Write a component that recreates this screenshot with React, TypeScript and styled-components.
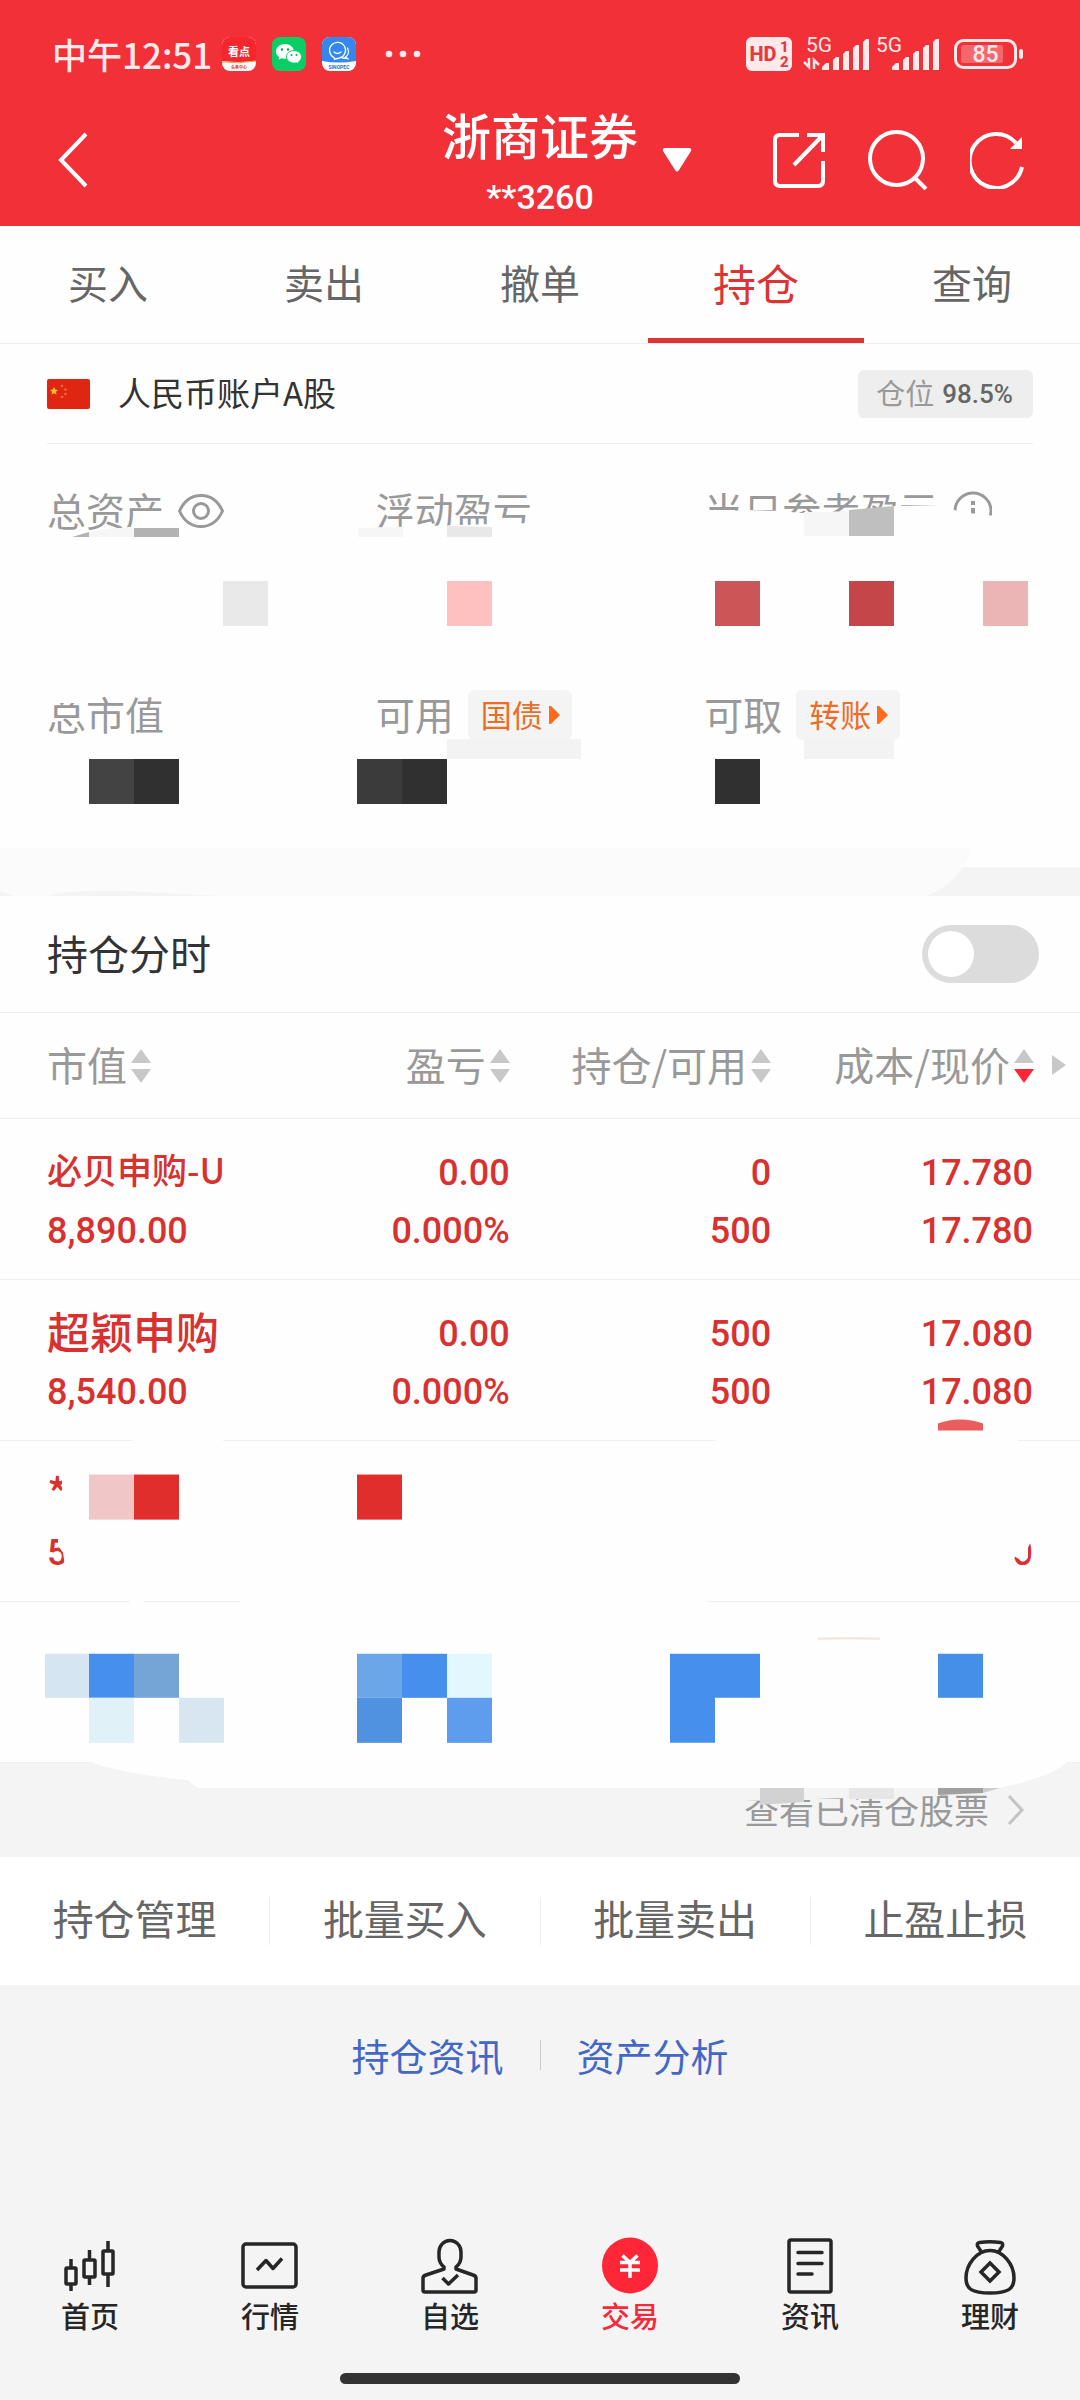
import React from "react";
import styled, { createGlobalStyle } from "styled-components";

const cjk = `"Noto Sans CJK SC", "Noto Sans", sans-serif`;
const numeric = `Roboto, "Noto Sans CJK SC", sans-serif`;

const GlobalStyle = createGlobalStyle`
  * { box-sizing: border-box; }
  body { margin: 0; background: #f4f4f4; font-family: ${cjk}; color: #333; }
  button { border: 0; padding: 0; margin: 0; background: none; font: inherit; color: inherit; }
  a { color: inherit; text-decoration: none; }
  h1, h2, p { margin: 0; font: inherit; }
  svg { display: block; flex: none; }
`;

const Page = styled.div`
  display: flex;
  flex-direction: column;
  min-height: 100vh;
`;

/* Optical centring for Chinese labels that stand beside icons */
const LabelText = styled.span`
  padding-bottom: 4px;
`;

/* ---------- top ---------- */
const Top = styled.header`
  background: #f13037;
  color: #fff;
`;
const StatusBar = styled.div`
  display: flex;
  align-items: center;
  height: 84px;
  padding: 24px 56px 0 52px;
  color: #ffe9ea;
  font-size: 35px;
  font-weight: 500;
  line-height: 58px;
`;
const AppIcons = styled.div`
  display: flex;
  align-items: center;
  gap: 16px;
  margin-left: 10px;
`;
const StatusRight = styled.div`
  display: flex;
  align-items: center;
  margin-left: auto;
`;
const NavBar = styled.div`
  display: grid;
  grid-template-columns: 1fr auto 1fr;
  align-items: center;
  height: 142px;
  padding: 10px 56px 0;
`;
const IconButton = styled.button`
  display: flex;
  align-items: center;
`;
const Broker = styled.div`
  text-align: center;
`;
const BrokerName = styled.h1`
  font-size: 49px;
  font-weight: 500;
  line-height: 80px;
`;
const BrokerId = styled.p`
  padding-bottom: 6px;
  font-family: ${numeric};
  font-size: 34px;
  font-weight: 500;
  line-height: 46px;
`;
const NavTools = styled.div`
  display: flex;
  align-items: center;
  gap: 42px;
  padding-left: 24px;
`;
const Dropdown = styled(IconButton)`
  margin-right: auto;
`;

const Tabs = styled.nav`
  display: flex;
  height: 118px;
  background: #fefefe;
  border-bottom: 1px solid #ececec;
`;
const Tab = styled.a<{ $active?: boolean }>`
  flex: 1;
  display: flex;
  justify-content: center;
  font-size: ${(p) => (p.$active ? 43 : 40)}px;
  line-height: 112px;
  color: ${(p) => (p.$active ? "#dd3333" : "#666")};
  border-bottom: 5px solid ${(p) => (p.$active ? "#dd3333" : "transparent")};
`;

/* ---------- assets ---------- */
const Covered = styled.section`
  position: relative;
`;
const Cover = styled.svg`
  position: absolute;
  inset: 0;
  width: 100%;
  height: 100%;
  pointer-events: none;
`;
const AssetCard = styled.div`
  padding: 0 47px 38px;
  background: #fefefe;
`;
const Account = styled.div`
  display: flex;
  align-items: center;
  height: 100px;
  border-bottom: 1px solid #ececec;
`;
const AccountName = styled.h2`
  display: flex;
  margin-left: 28px;
  font-size: 33px;
`;
const Position = styled.div`
  display: flex;
  align-items: center;
  gap: 8px;
  height: 48px;
  margin-left: auto;
  padding: 0 20px 0 18px;
  border-radius: 6px;
  background: #eee;
  font-size: 29px;
  color: #999;
`;
const PositionValue = styled.b`
  font-family: ${numeric};
  font-size: 26px;
  font-weight: 500;
  color: #666;
`;
const AssetGrid = styled.div`
  display: grid;
  grid-template-columns: repeat(3, 1fr);
  row-gap: 60px;
  padding-top: 37px;
`;
const Asset = styled.div`
  height: 144px;
`;
const AssetLabel = styled.div`
  display: flex;
  align-items: center;
  gap: 14px;
  height: 60px;
  font-size: 39px;
  color: #999;
  white-space: nowrap;
`;
const Tag = styled.button`
  display: flex;
  align-items: center;
  gap: 6px;
  height: 50px;
  padding: 0 12px 0 13px;
  border-radius: 6px;
  background: #f4f4f4;
  font-size: 31px;
  color: #ea6d28;
`;
const Gap = styled.div`
  height: 29px;
  background: #f4f4f4;
`;

/* ---------- holdings ---------- */
const SwitchRow = styled.label`
  display: flex;
  align-items: center;
  justify-content: space-between;
  height: 117px;
  padding: 0 41px 0 47px;
  background: #fefefe;
  border-bottom: 1px solid #ececec;
  font-size: 41px;
`;
const Switch = styled.input`
  appearance: none;
  width: 117px;
  height: 58px;
  margin: 0;
  padding: 6px;
  border-radius: 29px;
  background: #dcdcdc;
  &::before {
    content: "";
    display: block;
    width: 46px;
    height: 46px;
    border-radius: 50%;
    background: #fff;
  }
`;
const Table = styled.table`
  width: 100%;
  table-layout: fixed;
  border-collapse: separate;
  border-spacing: 0;
  background: #fefefe;
`;
const Th = styled.th<{ $width?: string; $start?: boolean }>`
  position: relative;
  width: ${(p) => p.$width ?? "auto"};
  height: 106px;
  padding: 0 0 0 ${(p) => (p.$start ? 47 : 0)}px;
  border-bottom: 1px solid #f0f0f0;
  font-weight: 400;
  &:last-child { padding-right: 46px; }
`;
const Sort = styled.button<{ $start?: boolean }>`
  display: flex;
  align-items: center;
  justify-content: ${(p) => (p.$start ? "flex-start" : "flex-end")};
  gap: 4px;
  width: 100%;
  font-size: 40px;
  color: #999;
  white-space: nowrap;
`;
const More = styled.svg`
  position: absolute;
  top: 42px;
  right: 14px;
`;
const Td = styled.td`
  height: 161px;
  padding: 25px 0 19px;
  border-bottom: 1px solid #f0f0f0;
  text-align: right;
  color: #d83130;
  &:first-child { padding-left: 47px; text-align: left; }
  &:last-child { padding-right: 47px; }
`;
const Line = styled.div`
  height: 58px;
  font-family: ${numeric};
  font-size: 36px;
  font-weight: 500;
  line-height: 58px;
  white-space: nowrap;
`;
const Name = styled(Line)<{ $small?: boolean }>`
  font-family: ${cjk};
  font-size: ${(p) => (p.$small ? 35 : 43)}px;
  line-height: 50px;
`;
const ClosedBar = styled.div`
  display: flex;
  justify-content: flex-end;
  height: 94px;
  padding: 0 55px;
  background: #f4f4f4;
`;
const ClosedLink = styled.a`
  display: flex;
  align-items: center;
  gap: 18px;
  font-size: 35px;
  color: #999;
`;

/* ---------- actions ---------- */
const Actions = styled.div`
  display: flex;
  align-items: center;
  height: 128px;
  background: #fff;
`;
const Action = styled.button`
  flex: 1;
  height: 48px;
  padding-bottom: 8px;
  border-right: 1px solid #eee;
  font-size: 41px;
  line-height: 40px;
  color: #666;
  &:last-child { border-right: 0; }
`;
const Links = styled.div`
  display: flex;
  justify-content: center;
  align-items: center;
  padding-top: 42px;
`;
const TextLink = styled.a`
  padding: 0 36px;
  font-size: 38px;
  line-height: 56px;
  color: #4368c4;
`;
const Divider = styled.span`
  width: 1px;
  height: 30px;
  background: #ccc;
`;

/* ---------- bottom bar ---------- */
const BottomNav = styled.nav`
  display: flex;
  margin-top: auto;
`;
const BottomItem = styled.a<{ $active?: boolean }>`
  flex: 1;
  display: flex;
  flex-direction: column;
  align-items: center;
  font-size: 29px;
  font-weight: 500;
  line-height: 36px;
  color: ${(p) => (p.$active ? "#f52a3a" : "#262626")};
`;
const HomeIndicator = styled.div`
  align-self: center;
  width: 37%;
  height: 11px;
  margin: 40px 0 16px;
  border-radius: 6px;
  background: #333;
`;

/* ---------- status icons ---------- */
const NewsApp = () => (
  <svg width="34" height="34" viewBox="0 0 34 34">
    <rect width="34" height="34" rx="8" fill="#fff" />
    <path d="M0 24V8a8 8 0 0 1 8-8h18a8 8 0 0 1 8 8v16q-17 2-34 0z" fill="#f7262c" />
    <path d="M0 25q17 2 34-1" stroke="#e9a63c" fill="none" />
    <text x="17" y="19" fontSize="11" fontWeight="700" fill="#fff" textAnchor="middle">看点</text>
    <text x="17" y="32" fontSize="4" fontWeight="700" fill="#e03030" textAnchor="middle">头条中心</text>
  </svg>
);
const WeChat = () => (
  <svg width="34" height="34" viewBox="0 0 34 34">
    <rect width="34" height="34" rx="8" fill="#07cf65" />
    <path d="M13 7c-5 0-9 3.400-9 7.500 0 2.300 1.300 4.300 3.300 5.700l-.8 2.600 3-1.600c1.100.3 2.200.5 3.500.5 5 0 9-3.200 9-7.200S18 7 13 7z" fill="#fff" />
    <path d="M22 13.500c-4.200 0-7.500 2.800-7.500 6.300s3.300 6.300 7.500 6.300c1 0 1.900-.1 2.700-.4l2.500 1.400-.7-2.200c1.800-1.200 3-3 3-5.100 0-3.500-3.300-6.300-7.500-6.300z" fill="#fff" stroke="#07cf65" />
    <g fill="#07a552"><circle cx="10" cy="12.500" r="1.200" /><circle cx="16" cy="12.500" r="1.200" /><circle cx="19.500" cy="18" r="1" /><circle cx="24.500" cy="18" r="1" /></g>
  </svg>
);
const SinopecApp = () => (
  <svg width="34" height="34" viewBox="0 0 34 34">
    <rect width="34" height="34" rx="8" fill="#fff" />
    <path d="M0 24V8a8 8 0 0 1 8-8h18a8 8 0 0 1 8 8v16q-17 3-34 0z" fill="#3387ee" />
    <g fill="none" stroke="#fff" strokeWidth="1.300" strokeLinecap="round">
      <path d="M12 20.500a8 8 0 1 1 5 .7l-4.500 1z" />
      <path d="M12 15q3.500 3 7 0M25.500 11c2 4 .5 7.500-2 9l2 1.500-5-.5" />
    </g>
    <text x="17" y="32" fontSize="5" fontWeight="700" fill="#2a6fc4" textAnchor="middle" fontFamily="Roboto">SINOPEC</text>
  </svg>
);
const Ellipsis = () => (
  <svg width="64" height="8" viewBox="0 0 64 8" fill="#ffe9ea">
    <circle cx="17" cy="4" r="3.300" /><circle cx="31" cy="4" r="3.300" /><circle cx="45" cy="4" r="3.300" />
  </svg>
);
const StatusIcons = () => (
  <svg width="278" height="54" viewBox="746 28 278 54" fill="#ffe9ea" fontFamily="Roboto, sans-serif">
    <rect x="746" y="38" width="46" height="34" rx="6" />
    <text x="749.500" y="62" fontSize="20" fontWeight="800" fill="#e33a42">HD</text>
    <text x="780" y="53" fontSize="15" fontWeight="800" fill="#e33a42">1</text>
    <text x="780" y="68" fontSize="15" fontWeight="800" fill="#e33a42">2</text>
    <text x="806" y="53" fontSize="21" fontWeight="400">5G</text>
    <path d="M809 59v9l-5-5M814 70v-9l5 5" stroke="#ffe9ea" strokeWidth="2.500" fill="none" />
    {[822, 892].map((x) => (
      <path
        key={x}
        d={`M${x} 71v-3l4-4h3v7zM${x + 11} 71V61l3-3h3v13zM${x + 21} 71V55l3-3h3v19zM${x + 31} 71V49l3-3h3v25zM${x + 41} 71V43l3-3h3v31z`}
      />
    ))}
    <text x="876" y="53" fontSize="21" fontWeight="400">5G</text>
    <rect x="955.500" y="41.500" width="60" height="27" rx="8" fill="none" stroke="#ffe9ea" strokeWidth="3" />
    <rect x="961" y="46" width="42" height="18" rx="3" fill="#f4676d" />
    <rect x="1019" y="50" width="4" height="10" rx="2" />
    <text x="985.500" y="63" fontSize="23" fontWeight="500" textAnchor="middle">85</text>
  </svg>
);

/* ---------- small drawings ---------- */
const Flag = () => (
  <svg width="43" height="30" viewBox="0 0 43 30">
    <rect width="43" height="30" rx="2" fill="#e02612" />
    <path d="M7 8l1.200 2.600 2.800.3-2.100 1.900.6 2.800L7 14.200l-2.500 1.400.6-2.800L3 10.900l2.800-.3z" fill="#ffc527" />
    <g fill="#ea6a30"><circle cx="15" cy="7" r="1.300" /><circle cx="18.500" cy="10.500" r="1.300" /><circle cx="18.500" cy="15" r="1.300" /><circle cx="15" cy="18" r="1.300" /></g>
  </svg>
);
const Eye = () => (
  <svg width="46" height="34" viewBox="0 0 46 34" fill="none" stroke="#999" strokeWidth="3">
    <path d="M1.500 17C6 7 14 1.500 23 1.500S40 7 44.500 17C40 27 32 32.500 23 32.500S6 27 1.500 17z" />
    <circle cx="23" cy="17" r="7.500" />
  </svg>
);
const Info = () => (
  <svg width="40" height="40" viewBox="0 0 40 40" fill="none" stroke="#999" strokeWidth="3">
    <circle cx="21" cy="20" r="18" />
    <path d="M21 17v14M21 10v4" strokeWidth="4" />
  </svg>
);
const TagArrow = () => (
  <svg width="11" height="18" viewBox="0 0 11 18"><path d="M0 0h2l9 9-9 9H0z" fill="#ff6a1c" /></svg>
);
const SortArrows = ({ down }: { down?: boolean }) => (
  <svg width="20" height="34" viewBox="0 0 20 34">
    <path d="M10 0l10 14H0z" fill="#c8c8c8" />
    <path d="M0 20h20L10 34z" fill={down ? "#ff2638" : "#c8c8c8"} />
  </svg>
);

const Redaction = ({ cells }: { cells: [number, number, number, number, string][] }) => (
  <>
    {cells.map(([x, y, w, h, c]) => (
      <rect key={`${x}-${y}`} x={x} y={y} width={w} height={h} fill={c} />
    ))}
  </>
);

const AssetCover = () => (
  <Cover viewBox="0 344 1080 552" preserveAspectRatio="none" aria-hidden="true">
    <path d="M70 537L90 531 130 527 180 528V545H70zM358 528L530 523V545H358z" fill="#fefefe" />
    <path d="M700 513L745 510 782 511 800 513 850 511 893 506 940 505 960 512 996 516V545H700z" fill="#fefefe" />
    <path d="M72 537l17-5v5zM134 528h45v9h-45z" fill="#b2b2b2" />
    <path d="M89 532l25-4h20v9H89zM358 528l45-1v10h-45zM804 512h45v24h-45z" fill="#f6f6f6" />
    <path d="M447 526l45 1v10h-45z" fill="#e8e8e8" />
    <path d="M849 510l45-4v30h-45z" fill="#bfbfbf" />
    <Redaction
      cells={[
        [223, 581, 45, 45, "#e9e9e9"],
        [447, 581, 45, 45, "#ffc0c0"],
        [715, 581, 45, 45, "#ca5658"],
        [849, 581, 45, 45, "#c54649"],
        [983, 581, 45, 45, "#ebb4b5"],
        [48, 690, 38, 13, "#fefefe"],
        [89, 759, 45, 45, "#434343"],
        [134, 759, 45, 45, "#303030"],
        [357, 759, 45, 45, "#3b3b3b"],
        [402, 759, 45, 45, "#303030"],
        [715, 759, 45, 45, "#303030"],
        [447, 739, 134, 20, "#f3f3f3"],
        [804, 739, 90, 20, "#f3f3f3"],
      ]}
    />
    <path d="M0 848H972Q962 880 928 896H0z" fill="#fbfbfb" />
    <path d="M0 891l13 5H0zM47 896q20-6 80-5l94 5z" fill="#f4f4f4" />
  </Cover>
);

const HoldingsCover = () => (
  <Cover viewBox="0 1013 1080 843" preserveAspectRatio="none" aria-hidden="true">
    <Redaction
      cells={[
        [133, 1438, 90, 4, "#fefefe"],
        [716, 1438, 302, 4, "#fefefe"],
        [130, 1599, 13, 4, "#fefefe"],
        [240, 1599, 467, 4, "#fefefe"],
        [89, 1474, 45, 45, "#f0c6c6"],
        [134, 1474, 45, 45, "#e02e2d"],
        [357, 1474, 45, 45, "#e02e2d"],
        [45, 1653, 44, 44, "#d5e5f2"],
        [89, 1653, 45, 44, "#468fec"],
        [134, 1653, 45, 44, "#74a5d6"],
        [89, 1697, 45, 45, "#e0f1f7"],
        [179, 1697, 45, 45, "#d8e6f2"],
        [357, 1653, 45, 44, "#6ba6e9"],
        [402, 1653, 45, 44, "#468fec"],
        [447, 1653, 45, 44, "#e3f7ff"],
        [357, 1697, 45, 45, "#5092e0"],
        [447, 1697, 45, 45, "#5e9cee"],
        [938, 1653, 45, 44, "#468fe9"],
      ]}
    />
    <path d="M670 1653h90v44h-45v45h-45z" fill="#468fec" />
    <path d="M938 1430v-7q22-8 45 0v7z" fill="#eb5c5c" />
    <path d="M818 1638q30-1 62 0" stroke="#f6e3d8" strokeWidth="2" fill="none" />
    <path d="M62 1478h10v32h-8l-2-12zM58 1532H74V1566H65L63 1552 58 1545z" fill="#fefefe" />
    <path d="M1005 1530H1036L1028 1547V1557Q1024 1563 1020 1559L1015 1556 1005 1566z" fill="#fefefe" />
    <path d="M93 1762Q130 1774 188 1779L198 1787H1000Q1050 1776 1066 1762V1760H93z" fill="#fefefe" />
    <path d="M745 1800L850 1797 940 1795V1787H745z" fill="#f4f4f4" />
    <path d="M760 1787h44v14l-44 3z" fill="#d2d2d2" />
    <path d="M849 1787h45v11h-45z" fill="#e6e6e6" />
    <path d="M938 1787h45v5l-45 2z" fill="#a0a0a0" />
    <path d="M983 1787h17l-17 5z" fill="#ccc" />
  </Cover>
);

/* ---------- bottom icons ---------- */
const NavIcon = ({ children }: { children: React.ReactNode }) => (
  <svg width="60" height="60" viewBox="0 0 60 60" fill="none" stroke="#262626" strokeWidth="3.500" strokeLinejoin="round">
    {children}
  </svg>
);
const bottomItems = [
  {
    label: "首页",
    icon: (
      <NavIcon>
        <rect x="6" y="31" width="10" height="16" rx="1" />
        <rect x="24" y="23" width="11" height="17" rx="1" />
        <rect x="43" y="14" width="10" height="23" rx="1" />
        <path d="M11 22v8M11 48v6M29.500 13v9M29.500 41v7M48 4v9M48 38v12" />
      </NavIcon>
    ),
  },
  {
    label: "行情",
    icon: (
      <NavIcon>
        <rect x="3" y="7" width="53" height="43" rx="3" />
        <path d="M17 33l9-9.500 7 8 9-10" />
      </NavIcon>
    ),
  },
  {
    label: "自选",
    icon: (
      <NavIcon>
        <path d="M24 30q-5-4-5-10v-5a11 11.500 0 0 1 22 0v5q0 6-5 10v2l17 6q3 1 3 3v12q0 2-2 2H5q-2 0-2-2V41q0-2 3-3l18-6z" />
        <path d="M22.500 41l6 6 9.500-9" />
      </NavIcon>
    ),
  },
  {
    label: "交易",
    active: true,
    icon: (
      <NavIcon>
        <circle cx="30" cy="28.500" r="28" fill="#ff2638" stroke="none" />
        <path d="M22.500 18.500l7.500 7 7.500-7M30 25v16M20 25.500h20M20 33h20" stroke="#fff" />
      </NavIcon>
    ),
  },
  {
    label: "资讯",
    icon: (
      <NavIcon>
        <rect x="9" y="3" width="42" height="52" rx="2" />
        <path d="M18 15.500h24M18 26.500h24M18 37h14" strokeLinecap="round" />
      </NavIcon>
    ),
  },
  {
    label: "理财",
    icon: (
      <NavIcon>
        <path d="M30 13.500c13 0 24 14 24 27.500 0 11-6 15-24 15S6 52 6 41C6 27.500 17 13.500 30 13.500z" />
        <path d="M21.500 15l-4-6q-1-3 2-3.500 10.500-1.500 21 0 3 .5 2 3.500l-4 6" />
        <path d="M30 26l9 9-9 9-9-9z" strokeLinejoin="miter" />
      </NavIcon>
    ),
  },
];

const rows = [
  { name: "必贝申购-U", small: true, value: "8,890.00", profit: ["0.00", "0.000%"], hold: ["0", "500"], price: ["17.780", "17.780"] },
  { name: "超颖申购", value: "8,540.00", profit: ["0.00", "0.000%"], hold: ["500", "500"], price: ["17.080", "17.080"] },
  { name: "*", value: "5", profit: ["", ""], hold: ["", ""], price: ["", "0"] },
  { name: "", value: "", profit: ["", ""], hold: ["", ""], price: ["", ""] },
];

const Pair = ({ lines }: { lines: string[] }) => (
  <Td>
    <Line>{lines[0]}</Line>
    <Line>{lines[1]}</Line>
  </Td>
);

export default function App() {
  return (
    <Page>
      <GlobalStyle />
      <Top>
        <StatusBar>
          中午12:51
          <AppIcons>
            <NewsApp />
            <WeChat />
            <SinopecApp />
            <Ellipsis />
          </AppIcons>
          <StatusRight>
            <StatusIcons />
          </StatusRight>
        </StatusBar>
        <NavBar>
          <IconButton aria-label="返回">
            <svg width="34" height="56" viewBox="0 0 34 56" fill="none" stroke="#fff" strokeWidth="4">
              <path d="M30 2L5 28l25 26" />
            </svg>
          </IconButton>
          <Broker>
            <BrokerName>浙商证券</BrokerName>
            <BrokerId>**3260</BrokerId>
          </Broker>
          <NavTools>
            <Dropdown aria-label="切换账户">
              <svg width="30" height="24" viewBox="0 0 30 24" fill="#fff">
                <path d="M3 0h24q3 0 2 3L17 22q-2 3-4 0L1 3Q0 0 3 0z" />
              </svg>
            </Dropdown>
            <IconButton aria-label="分享">
              <svg width="54" height="56" viewBox="0 0 54 56" fill="none" stroke="#fff" strokeWidth="4">
                <path d="M27 3H8Q3 3 3 8v41q0 5 5 5h38q5 0 5-5V29M35 3h16v17M51 3L22 33" />
              </svg>
            </IconButton>
            <IconButton aria-label="搜索">
              <svg width="60" height="60" viewBox="0 0 60 60" fill="none" stroke="#fff" strokeWidth="4">
                <circle cx="28.500" cy="28.500" r="26.500" />
                <path d="M47 48l11 11" />
              </svg>
            </IconButton>
            <IconButton aria-label="刷新">
              <svg width="54" height="58" viewBox="0 0 54 58" fill="none" stroke="#fff" strokeWidth="4">
                <path d="M52 36A26.500 27 0 1 1 46 12" />
                <path d="M52 6v12H40z" fill="#fff" stroke="none" />
              </svg>
            </IconButton>
          </NavTools>
        </NavBar>
      </Top>

      <Tabs>
        {["买入", "卖出", "撤单", "持仓", "查询"].map((t) => (
          <Tab key={t} href="#" $active={t === "持仓"}>{t}</Tab>
        ))}
      </Tabs>

      <Covered>
        <AssetCard>
          <Account>
            <Flag />
            <AccountName><LabelText>人民币账户A股</LabelText></AccountName>
            <Position>
              <LabelText>仓位</LabelText>
              <PositionValue>98.5%</PositionValue>
            </Position>
          </Account>
          <AssetGrid>
            <Asset><AssetLabel><LabelText>总资产</LabelText><Eye /></AssetLabel></Asset>
            <Asset><AssetLabel><LabelText>浮动盈亏</LabelText></AssetLabel></Asset>
            <Asset><AssetLabel><LabelText>当日参考盈亏</LabelText><Info /></AssetLabel></Asset>
            <Asset><AssetLabel><LabelText>总市值</LabelText></AssetLabel></Asset>
            <Asset>
              <AssetLabel><LabelText>可用</LabelText><Tag><LabelText>国债</LabelText><TagArrow /></Tag></AssetLabel>
            </Asset>
            <Asset>
              <AssetLabel><LabelText>可取</LabelText><Tag><LabelText>转账</LabelText><TagArrow /></Tag></AssetLabel>
            </Asset>
          </AssetGrid>
        </AssetCard>
        <Gap />
        <AssetCover />
      </Covered>

      <SwitchRow>
        <LabelText>持仓分时</LabelText>
        <Switch type="checkbox" />
      </SwitchRow>

      <Covered>
        <Table>
          <thead>
            <tr>
              <Th $width="28%" $start><Sort $start><LabelText>市值</LabelText><SortArrows /></Sort></Th>
              <Th $width="19.2%"><Sort><LabelText>盈亏</LabelText><SortArrows /></Sort></Th>
              <Th $width="24.2%"><Sort><LabelText>持仓/可用</LabelText><SortArrows /></Sort></Th>
              <Th>
                <Sort><LabelText>成本/现价</LabelText><SortArrows down /></Sort>
                <More width="14" height="20" viewBox="0 0 14 20"><path d="M0 0l14 10L0 20z" fill="#c8c8c8" /></More>
              </Th>
            </tr>
          </thead>
          <tbody>
            {rows.map((r, i) => (
              <tr key={i}>
                <Td>
                  <Name $small={r.small}>{r.name}</Name>
                  <Line>{r.value}</Line>
                </Td>
                <Pair lines={r.profit} />
                <Pair lines={r.hold} />
                <Pair lines={r.price} />
              </tr>
            ))}
          </tbody>
        </Table>
        <ClosedBar>
          <ClosedLink href="#">
            <LabelText>查看已清仓股票</LabelText>
            <svg width="18" height="32" viewBox="0 0 18 32" fill="none" stroke="#c4c4c4" strokeWidth="3">
              <path d="M2 2l13 14L2 30" />
            </svg>
          </ClosedLink>
        </ClosedBar>
        <HoldingsCover />
      </Covered>

      <Actions>
        {["持仓管理", "批量买入", "批量卖出", "止盈止损"].map((t) => (
          <Action key={t}>{t}</Action>
        ))}
      </Actions>
      <Links>
        <TextLink href="#">持仓资讯</TextLink>
        <Divider />
        <TextLink href="#">资产分析</TextLink>
      </Links>

      <BottomNav>
        {bottomItems.map((b) => (
          <BottomItem key={b.label} href="#" $active={b.active}>
            {b.icon}
            {b.label}
          </BottomItem>
        ))}
      </BottomNav>
      <HomeIndicator />
    </Page>
  );
}
